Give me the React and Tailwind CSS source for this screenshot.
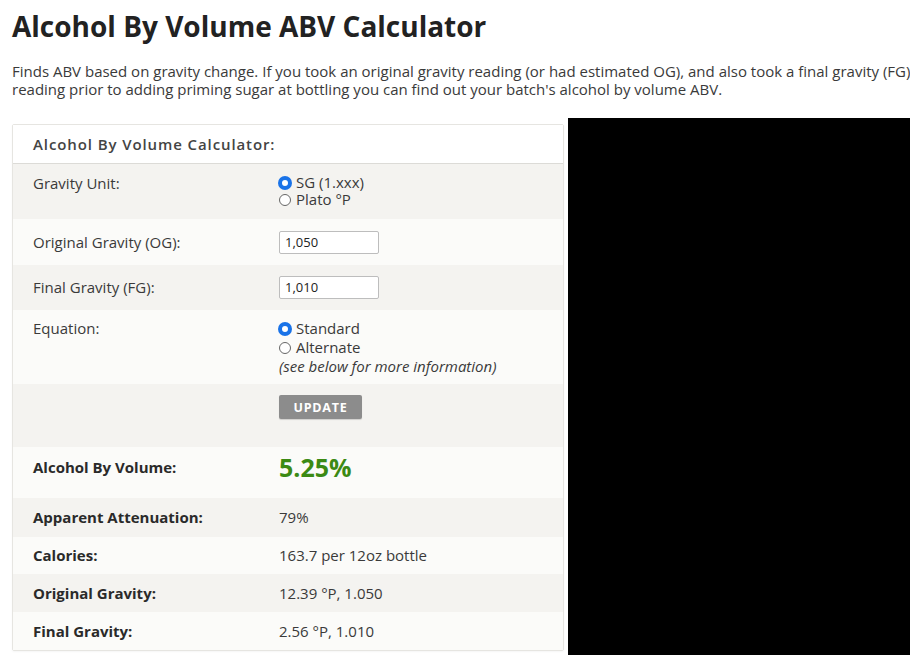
import React from 'react'

const Radio = ({ checked, label, h = 'h-[18px] leading-[18px]' }) => (
  <label className={`flex items-center ${h}`}>
    <span
      className={`w-[12px] h-[12px] rounded-full mr-[5px] box-border ${
        checked ? 'border-[3px] border-[#1a73e8] bg-white ring-1 ring-[#1a73e8]' : 'border border-[#666] bg-white'
      }`}
    />
    <span>{label}</span>
  </label>
)

const Row = ({ shade, label, bold, children, className = '' }) => (
  <div className={`flex px-[20px] ${shade ? 'bg-[#f4f3f0]' : 'bg-[#fbfbf9]'} ${className}`}>
    <div className={`w-[246px] shrink-0 leading-[19px] ${bold ? 'font-bold text-[#2a2a2a]' : ''}`}>{label}</div>
    <div className="flex-1 leading-[19px]">{children}</div>
  </div>
)

const Input = ({ value }) => (
  <div className="w-[100px] h-[23px] border border-[#bdbdbd] rounded-[2px] bg-white px-[5px] text-[13px] leading-[21px] text-[#222]">
    {value}
  </div>
)

export default function App() {
  return (
    <div className="min-h-[655px] bg-white text-[#3a3a3a] font-['Open_Sans',sans-serif] overflow-hidden">
      <div className="px-[12px] pt-[6px]">
        <h1 className="text-[28px] font-bold text-[#222] leading-[40px]">Alcohol By Volume ABV Calculator</h1>
        <p className="mt-[16px] text-[15px] leading-[18px] whitespace-nowrap">
          Finds ABV based on gravity change. If you took an original gravity reading (or had estimated OG), and also took a final gravity (FG)
          <br />
          reading prior to adding priming sugar at bottling you can find out your batch's alcohol by volume ABV.
        </p>
      </div>

      <div className="flex mt-[20px] pl-[12px] items-start">
        <div className="w-[552px] mt-[6px] border border-[#e6e5e1] rounded-[2px] shadow-[0_1px_2px_rgba(0,0,0,0.04)] text-[15px]">
          <div className="h-[39px] bg-white border-b border-[#dcdbd7] px-[20px] flex items-center">
            <span className="text-[15px] font-semibold tracking-[0.9px] text-[#444]">Alcohol By Volume Calculator:</span>
          </div>

          <Row shade label="Gravity Unit:" className="pt-[10px] h-[55px]">
            <Radio checked label="SG (1.xxx)" h="h-[17px] leading-[17px]" />
            <Radio label="Plato °P" h="h-[17px] leading-[17px]" />
          </Row>

          <Row label="Original Gravity (OG):" className="h-[46px] items-center">
            <Input value="1,050" />
          </Row>

          <Row shade label="Final Gravity (FG):" className="h-[45px] items-center">
            <Input value="1,010" />
          </Row>

          <Row label="Equation:" className="pt-[9px] h-[74px]">
            <Radio checked label="Standard" h="h-[19px] leading-[19px]" />
            <Radio label="Alternate" h="h-[19px] leading-[19px]" />
            <div className="italic h-[19px] leading-[19px]">(see below for more information)</div>
          </Row>

          <Row shade label="" className="h-[63px] pt-[11px]">
            <button className="w-[83px] h-[24px] rounded-[2px] bg-[#8c8c8c] text-white text-[12.5px] font-bold tracking-[0.8px] shadow-[0_1px_1px_rgba(0,0,0,0.15)]">
              UPDATE
            </button>
          </Row>

          <Row bold label="Alcohol By Volume:" className="h-[51px] items-center pb-[10px]">
            <span className="text-[25px] font-bold text-[#3b8a14] leading-none">5.25%</span>
          </Row>

          <Row shade bold label="Apparent Attenuation:" className="h-[39px] items-center">
            79%
          </Row>
          <Row bold label="Calories:" className="h-[37px] items-center">
            163.7 per 12oz bottle
          </Row>
          <Row shade bold label="Original Gravity:" className="h-[38px] items-center">
            12.39 °P, 1.050
          </Row>
          <Row bold label="Final Gravity:" className="h-[38px] items-center">
            2.56 °P, 1.010
          </Row>
        </div>

        <div className="ml-[4px] flex-1 h-[540px] bg-black" />
      </div>
    </div>
  )
}
